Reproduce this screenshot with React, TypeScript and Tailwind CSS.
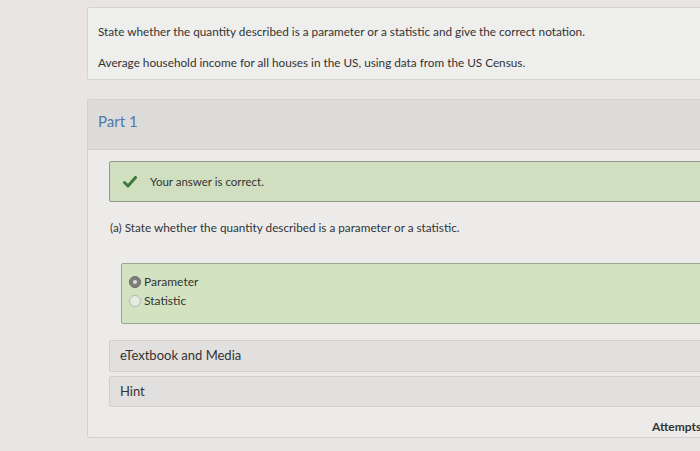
export default function App() {
  return (
    <div
      className="w-[700px] h-[451px] overflow-hidden bg-[#e8e5e4] text-[#333333]"
      style={{ fontFamily: "Lato, 'Open Sans', sans-serif" }}
    >
      <div className="pl-[87px] pt-[7px]">
        {/* Question */}
        <div className="w-[700px] h-[73px] bg-[#eeeeec] border border-[#d4d4d2] rounded-[2px] pl-[10px] pt-[16px] text-[11.75px]">
          <p className="leading-[16px]">
            State whether the quantity described is a parameter or a statistic and give the correct notation.
          </p>
          <p className="leading-[16px] mt-[15px]">
            Average household income for all houses in the US, using data from the US Census.
          </p>
        </div>

        {/* Part panel */}
        <div className="mt-[19px] w-[700px] h-[339px] bg-[#ecebea] border border-[#d1d1cf] rounded-[2px]">
          <div className="h-[50px] bg-[#dddbda] border-b border-[#d0d0ce] pl-[10px] pb-[6px] flex items-center">
            <span className="text-[15px] text-[#4d7aa9]">Part 1</span>
          </div>

          <div className="pl-[21px]">
            <div className="mt-[11px] h-[41px] bg-[#cfdfbf] border border-[#8e9c85] rounded-[2px] flex items-center">
              <svg width="14" height="12" viewBox="0 0 14 12" className="ml-[13px]">
                <path d="M1.5 6.5 L5 10 L12.5 1.5" fill="none" stroke="#3f7a3b" strokeWidth="3" strokeLinecap="round" strokeLinejoin="round" />
              </svg>
              <span className="ml-[13px] text-[11.5px]">Your answer is correct.</span>
            </div>

            <p className="mt-[18px] text-[11.75px] leading-[16px] pl-[1px]">
              (a) State whether the quantity described is a parameter or a statistic.
            </p>

            <div className="mt-[27px] ml-[12px] h-[61px] bg-[#d3e3c2] border border-[#98a78e] rounded-[2px] pl-[7px] pt-[11px] flex flex-col gap-[5px] text-[12px]">
              <label className="flex items-center gap-[3px] leading-[14px]">
                <span className="w-[12px] h-[12px] rounded-full bg-[#7d7f7b] border border-[#6a6c68] flex items-center justify-center">
                  <span className="w-[4px] h-[4px] rounded-full bg-[#dcdcd8]" />
                </span>
                Parameter
              </label>
              <label className="flex items-center gap-[3px] leading-[14px]">
                <span className="w-[12px] h-[12px] rounded-full bg-[#e4ece0] border border-[#b4b8b0]" />
                Statistic
              </label>
            </div>

            <div className="mt-[16px] h-[32px] bg-[#e1e0de] border border-[#d0d0ce] rounded-[2px] pl-[10px] flex items-center text-[13px]">
              eTextbook and Media
            </div>
            <div className="mt-[4px] h-[31px] bg-[#e1e0de] border border-[#d0d0ce] rounded-[2px] pl-[10px] flex items-center text-[13px]">
              Hint
            </div>
          </div>

          <div className="mt-[11px] flex justify-end pr-[20px] text-[12px] font-bold text-[#333333]">
            Attempts: 1 of 3 used
          </div>
        </div>
      </div>
    </div>
  );
}
